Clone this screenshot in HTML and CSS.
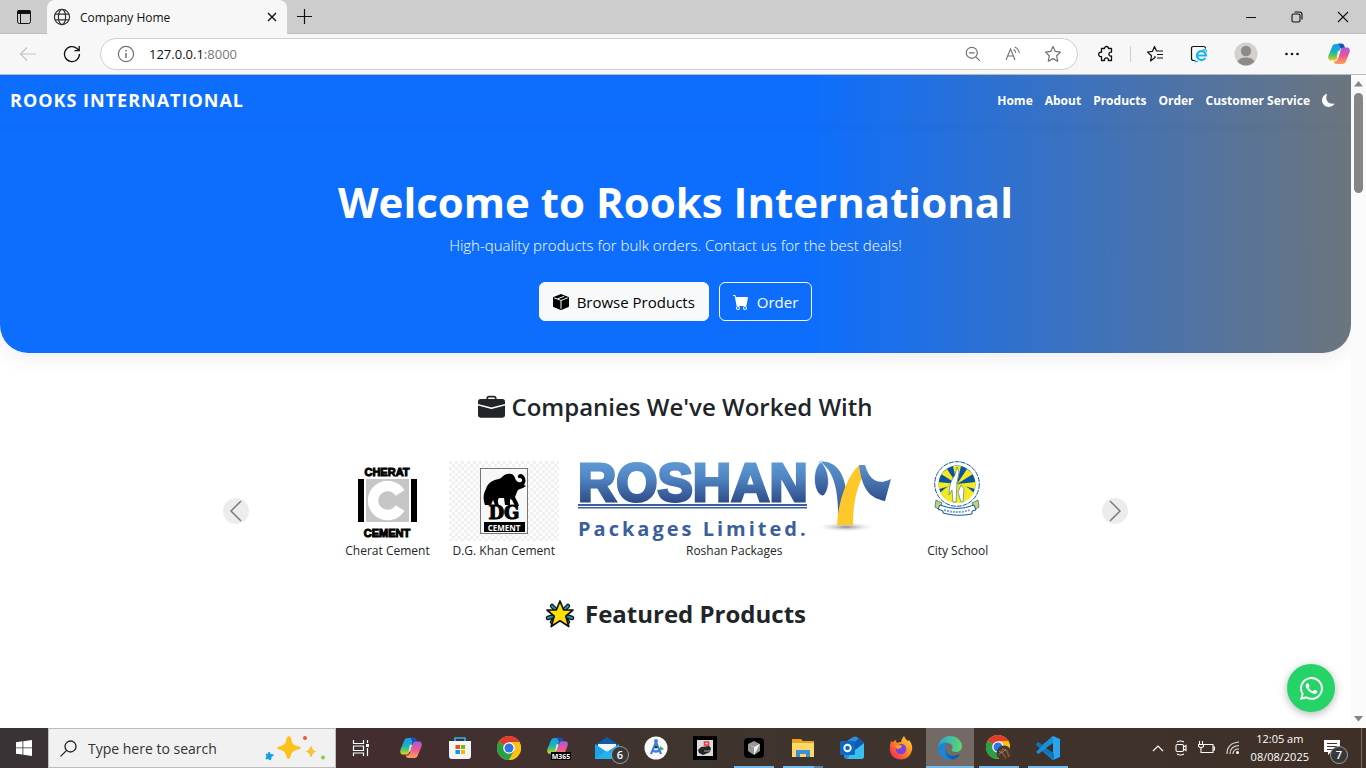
FILE: index.html
```html
<!DOCTYPE html>
<html lang="en">
<head>
<meta charset="utf-8">
<title>Company Home</title>
<link rel="stylesheet" href="styles.css">
</head>
<body>
<svg class="defs" width="0" height="0" aria-hidden="true">
  <defs>
    <linearGradient id="cpA" x1="0" y1="0" x2="0" y2="1"><stop offset="0" stop-color="#1b9be8"/><stop offset=".45" stop-color="#12b3c4"/><stop offset=".75" stop-color="#6cc552"/><stop offset="1" stop-color="#f3d21b"/></linearGradient>
    <linearGradient id="cpB" x1="0" y1="0" x2="0" y2="1"><stop offset="0" stop-color="#a55be8"/><stop offset=".5" stop-color="#f0568c"/><stop offset="1" stop-color="#fba35c"/></linearGradient>
    <linearGradient id="roshanBlue" x1="0" y1="0" x2="0" y2="1"><stop offset="0" stop-color="#5a93cf"/><stop offset="1" stop-color="#2f4f8c"/></linearGradient>
    <linearGradient id="roshanText" gradientUnits="userSpaceOnUse" x1="0" y1="0" x2="0" y2="42"><stop offset="0" stop-color="#5f9bd6"/><stop offset=".4" stop-color="#5085c2"/><stop offset="1" stop-color="#2d4b88"/></linearGradient>
    <linearGradient id="edgeA" x1="0" y1="0" x2="1" y2="0"><stop offset="0" stop-color="#27a6de"/><stop offset="1" stop-color="#5fd668"/></linearGradient>
    <linearGradient id="edgeB" x1="0" y1="0" x2="1" y2="1"><stop offset="0" stop-color="#1583d8"/><stop offset="1" stop-color="#0c4f9c"/></linearGradient>
    <linearGradient id="fox" x1="1" y1="0" x2="0" y2="1"><stop offset="0" stop-color="#ffe13d"/><stop offset=".45" stop-color="#ff8a1f"/><stop offset="1" stop-color="#ee1765"/></linearGradient>
    <radialGradient id="ground"><stop offset="0" stop-color="#8a8a8a"/><stop offset="1" stop-color="#ffffff" stop-opacity="0"/></radialGradient>
    <pattern id="checks" width="6" height="6" patternUnits="userSpaceOnUse"><rect width="6" height="6" fill="#fdfdfd"/><path d="M0 0h3v3H0zM3 3h3v3H3z" fill="#f0f0f0"/></pattern>
    <symbol id="copilot" viewBox="0 0 24 24">
      <path d="M17.500 4.400C17 2.800 16 2 14.300 2H8.600C6.800 2 5.600 3.200 5 5L1.500 13.500c-.9 2.900.1 5 2.700 5h3c1.700 0 2.700-1 3.200-2.600L13 7.500c.6-2 1.800-3.100 4.500-3.100z" fill="url(#cpA)"/>
      <path d="M10 1.500h4.300c1.700 0 2.600.9 3.100 2.500l.8 3h-2.500c-1.500 0-2.300-.8-2.900-2.500-.5-1.900-1.100-3-2.800-3z" fill="#1652b5"/>
      <path d="M6.500 19.600c.5 1.600 1.500 2.400 3.200 2.400h5.700c1.800 0 3-1.200 3.600-3l3.500-8.500c.9-2.900-.1-5-2.700-5h-3c-1.700 0-2.700 1-3.200 2.600L11 16.500c-.6 2-1.800 3.100-4.500 3.100z" fill="url(#cpB)"/>
      <path d="M10.800 8.700h2.600l-2.200 7.100H9.600z" fill="#fff" fill-opacity=".75"/>
    </symbol>
    <symbol id="chrome" viewBox="0 0 24 24">
      <circle cx="12" cy="12" r="12" fill="#fbc116"/>
      <path d="M12 12 1.600 6A12 12 0 0 1 22.400 6z" fill="#e33b2e"/>
      <path d="M1.600 6A12 12 0 0 0 12 24l5.200-9L12 12z" fill="#2b9f48"/>
      <path d="M12 6h10.400A12 12 0 0 1 12 24l5.200-9z" fill="#fbc116"/>
      <circle cx="12" cy="12" r="5.800" fill="#fff"/><circle cx="12" cy="12" r="4.500" fill="#2f74e8"/>
    </symbol>
  </defs>
</svg>

<header class="browser">
  <div class="tabstrip">
    <button class="icon-btn tab-actions" aria-label="Tab actions"><svg width="16" height="16" viewBox="0 0 16 16"><rect x="1.500" y="1.500" width="13" height="13" rx="2" fill="none" stroke="#111"/><path d="M1 3q0-2 2-2h10q2 0 2 2v2H1zM4 5h1v9H4z" fill="#111"/></svg></button>
    <div class="tab">
      <svg width="18" height="18" viewBox="0 0 18 18" fill="none" stroke="#333" stroke-width="1.200"><circle cx="9" cy="9" r="7.600"/><ellipse cx="9" cy="9" rx="3.600" ry="7.600"/><path d="M2 6.200h14M2 11.800h14"/></svg>
      <span class="tab-title">Company Home</span>
      <button class="icon-btn tab-close" aria-label="Close tab"><svg width="10" height="10" viewBox="0 0 10 10" stroke="#111" stroke-width="1.400"><path d="m1 1 8 8M9 1 1 9"/></svg></button>
    </div>
    <button class="icon-btn new-tab" aria-label="New tab"><svg width="15" height="15" viewBox="0 0 15 15" stroke="#111" stroke-width="1.200"><path d="M7.500 0v15M0 7.500h15"/></svg></button>
    <div class="window-controls">
      <button class="icon-btn" aria-label="Minimize"><svg width="12" height="12" viewBox="0 0 12 12" stroke="#111"><path d="M1 6.500h10"/></svg></button>
      <button class="icon-btn" aria-label="Restore"><svg width="12" height="12" viewBox="0 0 12 12" fill="none" stroke="#111" stroke-width="1.100"><rect x="1" y="3" width="8" height="8" rx="1.500"/><path d="M3.500 1h5Q11 1 11 3.500v5"/></svg></button>
      <button class="icon-btn" aria-label="Close"><svg width="12" height="12" viewBox="0 0 12 12" stroke="#111" stroke-width="1.100"><path d="m1 1 10 10M11 1 1 11"/></svg></button>
    </div>
  </div>
  <div class="toolbar">
    <button class="icon-btn nav-btn" aria-label="Back"><svg width="18" height="16" viewBox="0 0 18 16" fill="none" stroke="#c4c4c4" stroke-width="1.200"><path d="M17 8H1.500M8 1.500 1.500 8 8 14.500"/></svg></button>
    <button class="icon-btn nav-btn" aria-label="Refresh"><svg width="18" height="18" viewBox="0 0 18 18" fill="none" stroke="#111" stroke-width="1.300"><path d="M16.500 9A7.500 7.500 0 1 1 14 3.500L16 5.500M16.200 1v4.700h-4.700"/></svg></button>
    <div class="address">
      <svg width="18" height="18" viewBox="0 0 18 18" fill="none" stroke="#707070" stroke-width="1.200"><circle cx="9" cy="9" r="7.600"/><path d="M9 8v5M9 5v1.500" stroke-width="1.500"/></svg>
      <span class="url"><span class="host">127.0.0.1</span>:8000</span>
      <button class="icon-btn" aria-label="Zoom out"><svg width="16" height="16" viewBox="0 0 16 16" fill="none" stroke="#707070" stroke-width="1.200"><circle cx="6.800" cy="6.800" r="5.500"/><path d="M4 6.800h5.600m1.300 4.100 4 4"/></svg></button>
      <button class="icon-btn" aria-label="Read aloud"><svg width="16" height="16" viewBox="0 0 16 16" fill="none" stroke="#707070" stroke-width="1.100"><path d="M1 14 5.500 3 10 14M2.700 10h5.700M8.500 3.500q2 1.300 2.300 3.500M9.800 1q4 1.800 4.700 6"/></svg></button>
      <button class="icon-btn" aria-label="Add to favorites"><svg width="18" height="18" viewBox="0 0 18 18" fill="none" stroke="#707070" stroke-width="1.200" stroke-linejoin="round"><path d="m9 1.500 2.300 4.900 5.200.7-3.800 3.700 1 5.400L9 13.600l-4.700 2.600 1-5.400L1.500 7.100l5.200-.7z"/></svg></button>
    </div>
    <div class="tools">
      <button class="icon-btn" aria-label="Extensions"><svg width="18" height="18" viewBox="0 0 18 18" fill="none" stroke="#111" stroke-width="1.300" stroke-linejoin="round"><path d="M4.500 3.500h3a2 2 0 1 1 4 0h3v3.700a2 2 0 1 0 0 3.800v4.500h-3.200a2 2 0 1 0-3.800 0h-3V11.500a2.200 2.200 0 1 1 0-4.200z"/></svg></button>
      <span class="divider"></span>
      <button class="icon-btn" aria-label="Favorites"><svg width="18" height="18" viewBox="0 0 18 18" fill="none" stroke="#111" stroke-width="1.200" stroke-linejoin="round"><path d="M9 11 9 12.500 4.500 16l1-5.200L1.500 7l5-.7L8.500 1.500l2 4.500h6.500M11 9.500h6M11 13h6"/></svg></button>
      <button class="icon-btn" aria-label="Internet Explorer mode"><svg width="18" height="18" viewBox="0 0 18 18" fill="none"><path d="M5 15.500H3.500q-2 0-2-2v-10q0-2 2-2h10q2 0 2 2" stroke="#111" stroke-width="1.200"/><path d="M15.300 13a4.500 4.500 0 1 1 .7-2.500H7" stroke="#1ab3ee" stroke-width="2.200"/><path d="M5.500 15q-1.800 3 2.500 1M12 5.500q5-2.500 4.300 1.500" stroke="#1ab3ee" stroke-width="1.200"/></svg></button>
      <button class="icon-btn" aria-label="Profile"><svg width="24" height="24" viewBox="0 0 24 24"><circle cx="12" cy="12" r="11.500" fill="#d3d1ce"/><circle cx="12" cy="9" r="5.200" fill="#8d8a87"/><path d="M3.500 19.500q2-4 8.500-4t8.500 4A11.500 11.500 0 0 1 12 23.500a11.500 11.500 0 0 1-8.500-4z" fill="#8d8a87"/></svg></button>
      <button class="icon-btn" aria-label="Settings and more"><svg width="16" height="4" viewBox="0 0 16 4" fill="#111"><circle cx="2.500" cy="2" r="1.300"/><circle cx="8" cy="2" r="1.300"/><circle cx="13.500" cy="2" r="1.300"/></svg></button>
      <button class="icon-btn" aria-label="Copilot"><svg width="26" height="24"><use href="#copilot"/></svg></button>
    </div>
  </div>
</header>

<div class="viewport">
  <main class="page">
    <div class="hero">
      <nav class="navbar">
        <a class="brand" href="#">ROOKS INTERNATIONAL</a>
        <div class="links">
          <a href="#">Home</a><a href="#">About</a><a href="#">Products</a><a href="#">Order</a><a href="#">Customer Service</a>
          <button class="icon-btn" aria-label="Dark mode"><svg width="13" height="13" viewBox="0 0 16 16" fill="#fff"><path d="M6 .278a.77.77 0 0 1 .08.858 7.200 7.200 0 0 0-.878 3.460c0 4.021 3.278 7.277 7.318 7.277q.792-.001 1.533-.16a.79.79 0 0 1 .81.316.73.73 0 0 1-.031.893A8.350 8.350 0 0 1 8.344 16C3.734 16 0 12.286 0 7.710 0 4.266 2.114 1.312 5.124.06A.75.75 0 0 1 6 .278"/></svg></button>
        </div>
      </nav>
      <section class="welcome">
        <h1>Welcome to Rooks International</h1>
        <p>High-quality products for bulk orders. Contact us for the best deals!</p>
        <div class="actions">
          <a class="btn btn-light" href="#"><svg width="16" height="16" viewBox="0 0 16 16" fill="currentColor"><path fill-rule="evenodd" d="M15.528 2.973a.75.75 0 0 1 .472.696v8.662a.75.75 0 0 1-.472.696l-7.250 2.900a.75.75 0 0 1-.557 0l-7.250-2.900A.75.75 0 0 1 0 12.331V3.669a.75.75 0 0 1 .471-.696L7.443.184l.01-.003.268-.108a.75.75 0 0 1 .558 0l.269.108.01.003zM10.404 2 4.250 4.461 1.846 3.500 1 3.839v.4l6.500 2.600v7.922l.5.2.5-.2V6.840l6.500-2.600v-.4l-.846-.339L8 5.961 5.596 5l6.154-2.461z"/></svg>Browse Products</a>
          <a class="btn btn-outline" href="#"><svg width="16" height="16" viewBox="0 0 16 16" fill="currentColor"><path d="M0 1.500A.5.5 0 0 1 .5 1H2a.5.5 0 0 1 .485.379L2.890 3H14.500a.5.5 0 0 1 .491.592l-1.500 8A.5.5 0 0 1 13 12H4a.5.5 0 0 1-.491-.408L2.010 3.607 1.610 2H.5a.5.5 0 0 1-.5-.5M5 12a2 2 0 1 0 0 4 2 2 0 0 0 0-4m7 0a2 2 0 1 0 0 4 2 2 0 0 0 0-4m-7 1a1 1 0 1 1 0 2 1 1 0 0 1 0-2m7 0a1 1 0 1 1 0 2 1 1 0 0 1 0-2"/></svg>Order</a>
        </div>
      </section>
    </div>

    <section class="companies">
      <h2><svg width="27" height="27" viewBox="0 0 16 16" fill="currentColor"><path d="M6.500 1A1.500 1.500 0 0 0 5 2.500V3H1.500A1.500 1.500 0 0 0 0 4.500v1.384l7.614 2.030a1.500 1.500 0 0 0 .772 0L16 5.884V4.500A1.500 1.500 0 0 0 14.500 3H11v-.5A1.500 1.500 0 0 0 9.500 1zm0 1h3a.5.5 0 0 1 .5.5V3H6v-.5a.5.5 0 0 1 .5-.5"/><path d="M0 12.500A1.500 1.500 0 0 0 1.500 14h13a1.500 1.500 0 0 0 1.500-1.500V6.850L8.129 8.947a.5.5 0 0 1-.258 0L0 6.850z"/></svg>Companies We've Worked With</h2>
      <div class="carousel">
        <button class="arrow" aria-label="Previous"><svg width="14" height="24" viewBox="0 0 14 24" fill="none" stroke="#7b7b7b" stroke-width="1.500"><path d="M12 2 2 12l10 10"/></svg></button>
        <div class="slides">
          <figure>
            <svg width="84" height="80" viewBox="0 0 84 80" role="img" aria-label="Cherat Cement logo">
              <text class="logo-narrow" x="41" y="15" text-anchor="middle">CHERAT</text>
              <path d="M12 18h6v43h-6zM65 18h6v43h-6z"/><path d="M20 18h43v43H20z" fill="#c6c6c6"/>
              <path d="M54 32A14.500 14.500 0 1 0 54 47" fill="none" stroke="#fff" stroke-width="10.500"/>
              <text class="logo-narrow" x="41" y="76" text-anchor="middle">CEMENT</text>
            </svg>
            <figcaption>Cherat Cement</figcaption>
          </figure>
          <figure>
            <svg width="110" height="80" viewBox="0 0 110 80" role="img" aria-label="D.G. Khan Cement logo">
              <rect width="110" height="80" fill="url(#checks)"/>
              <rect x="31.500" y="7.500" width="47" height="65" fill="#f8f8f8" stroke="#777"/>
              <path d="M36 44C34 38 34 33 37 28c1-5 6-9 13-10 3-1 4-4 8-5 4-1 7 0 8 4 1 3 3 5 6 4 2-1 1-4-1-4-3 1-3-4 1-4 4 1 6 7 3 11l2 1-3 2c-3 1-5 1-6 4l-2 5 3 6 1 3h-4l-3-6-2-1v6h-5l-1-7-5 0c-2 2-1 5 0 7h-4l-2-5-2 5z"/>
              <text class="logo-slab" x="55" y="58" text-anchor="middle">DG</text>
              <path d="M35 61h41v10H35z"/><text class="logo-tag" x="55" y="70" text-anchor="middle">CEMENT</text>
            </svg>
            <figcaption>D.G. Khan Cement</figcaption>
          </figure>
          <figure>
            <svg class="wide-logo" width="313" height="80" viewBox="0 0 313 80" role="img" aria-label="Roshan Packages logo">
              <text class="logo-roshan" x="0" y="40">ROSHAN</text>
              <path d="M0 43h229v2H0zM0 46h229v1.500H0z" fill="#3b5f9d"/>
              <text class="logo-packages" x="0" y="75">Packages Limited.</text>
              <ellipse cx="268" cy="66" rx="31" ry="5" fill="url(#ground)"/>
              <path d="M240 1c16-3 26 10 28 28l-8 33C261 34 257 10 243 2z" fill="url(#roshanBlue)"/>
              <path d="M245 35C234 33 234 6 243 1c9 8 10 28 2 34z" fill="url(#roshanBlue)" stroke="#fff" stroke-width=".7"/>
              <path d="M259 64c1-22 9-47 22-60l6 8c-9 14-12 32-12 52z" fill="#fec928"/>
              <path d="M281 4h6c5 17 14 20 26 14l-6 22c-15-3-23-11-26-36z" fill="url(#roshanBlue)"/>
            </svg>
            <figcaption>Roshan Packages</figcaption>
          </figure>
          <figure>
            <svg width="96" height="80" viewBox="0 0 96 80" role="img" aria-label="City School crest">
              <path d="m26 39 6 3-2 7-5-3zM68 39l-6 3 2 7 5-3z" fill="#c5d36a" stroke="#356d9d" stroke-width=".8"/>
              <circle cx="47" cy="23" r="22.300" fill="#fff" stroke="#0b559f" stroke-dasharray="5 1"/>
              <circle cx="47" cy="23" r="18.500" fill="#0b559f"/>
              <path d="M47 23 43 5h8zM47 23 31 13l6-5zM47 23l16-10-6-5zM47 23 29 28l-1-7zM47 23l18 5 1-7z" fill="#f5ea22"/>
              <path d="M30 32q17-18 34 0-6 10-17 10T30 32z" fill="#f5ea22"/>
              <path d="m47 6 2 5-2 10-1 20h-3l-1-12-3 5q0-13 6-20zM51 24l3 4-1 13h-2l-3-10z" fill="#fff" stroke="#4b8089" stroke-width=".7"/>
              <path d="M30 44q17 7 34 0l2 5-4 1v3q-15 3-29-1v-2l-5-2z" fill="#fff" stroke="#0b559f"/>
              <path d="M34 49q13 4 26 0" fill="none" stroke="#7da1c5" stroke-width="2" stroke-dasharray="2 1"/>
            </svg>
            <figcaption>City School</figcaption>
          </figure>
        </div>
        <button class="arrow" aria-label="Next"><svg width="14" height="24" viewBox="0 0 14 24" fill="none" stroke="#7b7b7b" stroke-width="1.500"><path d="m2 2 10 10L2 22"/></svg></button>
      </div>
    </section>

    <section class="featured">
      <h2><svg width="30" height="30" viewBox="0 0 30 30" stroke="#111" stroke-linejoin="round"><path d="m7 7 16 16M23 7 7 23M3 19l9-3M27 19l-9-3" stroke-width="4.500" stroke-linecap="round"/><path d="m7 7 16 16M23 7 7 23M3 19l9-3M27 19l-9-3" stroke="#2293b8" stroke-width="2" stroke-linecap="round"/><path d="m15 2 3.700 9h9.300l-7.200 6.200 3 10.300L15 21.800l-8.800 5.700 3-10.300L2 11h9.300z" fill="#ffe000" stroke-width="1.700"/></svg>Featured Products</h2>
    </section>
    <a class="whatsapp" href="#" aria-label="WhatsApp"><svg width="23" height="23" viewBox="0 0 16 16" fill="#fff"><path d="M13.601 2.326A7.850 7.850 0 0 0 7.994 0C3.627 0 .068 3.558.064 7.926c0 1.399.366 2.760 1.057 3.965L0 16l4.204-1.102a7.900 7.900 0 0 0 3.790.965h.004c4.368 0 7.926-3.558 7.930-7.930A7.900 7.900 0 0 0 13.600 2.326zM7.994 14.521a6.600 6.600 0 0 1-3.356-.92l-.24-.144-2.494.654.666-2.433-.156-.251a6.560 6.560 0 0 1-1.007-3.505c0-3.626 2.957-6.584 6.591-6.584a6.560 6.560 0 0 1 4.660 1.931 6.560 6.560 0 0 1 1.928 4.660c-.004 3.639-2.961 6.592-6.592 6.592m3.615-4.934c-.197-.099-1.170-.578-1.353-.646-.182-.065-.315-.099-.445.099-.133.197-.513.646-.627.775-.114.133-.232.148-.43.05-.197-.1-.836-.308-1.592-.985-.59-.525-.985-1.175-1.103-1.372-.114-.198-.011-.304.088-.403.087-.088.197-.232.296-.346.1-.114.133-.198.198-.33.065-.134.034-.248-.015-.347-.05-.099-.445-1.076-.612-1.470-.16-.389-.323-.335-.445-.34-.114-.007-.247-.007-.38-.007a.73.73 0 0 0-.529.247c-.182.198-.691.677-.691 1.654s.71 1.916.81 2.049c.098.133 1.394 2.132 3.383 2.992.47.205.84.326 1.129.418.475.152.904.129 1.246.08.38-.058 1.171-.48 1.338-.943.164-.464.164-.86.114-.992-.049-.133-.182-.198-.38-.297"/></svg></a>
  </main>
  <div class="scrollbar">
    <svg width="9" height="6" viewBox="0 0 9 6" fill="#858585"><path d="M4.500 0 9 5.500H0z"/></svg>
    <span class="thumb"></span>
    <svg class="down" width="9" height="6" viewBox="0 0 9 6" fill="#858585"><path d="M0 0h9L4.500 5.500z"/></svg>
  </div>
</div>

<footer class="taskbar">
  <button class="task start" aria-label="Start"><svg width="16" height="16" viewBox="0 0 16 16" fill="#fff"><path d="m0 2.200 6.500-.9v6.200H0zM7.300 1.200 16 0v7.500H7.300zM0 8.300h6.500v6.300L0 13.700zM7.300 8.300H16V16l-8.700-1.200z"/></svg></button>
  <label class="search">
    <svg width="17" height="17" viewBox="0 0 17 17" fill="none" stroke="#222" stroke-width="1.300"><circle cx="10.500" cy="6.500" r="5.500"/><path d="m6.600 10.400-6 6"/></svg>
    <input type="text" placeholder="Type here to search" aria-label="Type here to search">
    <svg width="62" height="28" viewBox="0 0 62 28"><path d="M24 2q2 0 3 6 1 3 5 4 4 1 4 2t-5 2q-4 1-5 5-1 4-2.500 4T21 21q-1-4-5-5t-4-2 4-2q4-1 5-5 1-5 3-5z" fill="#fcc11b"/><path d="M46 12q1 0 1.500 3 .5 1.500 4 2.500-3.500 1-4 3Q47 23 46 23t-1.500-3q-.5-1.500-4-2.500 3.500-1 4-3Q45 12 46 12z" fill="#f9c03d"/><path d="m4 18 1.500 2.500 3 .5L6 23l-.5 3L3 24.500l-2 .5 1-3-1-2 2.500.3z" fill="#10a0e8" stroke="#10a0e8"/><circle cx="40" cy="4" r="2" fill="#f0592a"/><circle cx="58" cy="23.500" r="2" fill="#86cc45"/></svg>
  </label>
  <div class="apps">
    <button class="task first" aria-label="Task view"><svg width="18" height="18" viewBox="0 0 18 18" fill="none" stroke="#fff" stroke-width="1.200"><path d="M1.500 1v3.500h10V1M1.500 17v-3h10v3M1.500 7h10v4.500h-10zM15.500 1v3M15.500 9v8"/><path d="M14 5h3v3h-3z" fill="#fff" stroke="none"/></svg></button>
    <button class="task" aria-label="Copilot"><svg width="24" height="24"><use href="#copilot"/></svg></button>
    <button class="task" aria-label="Microsoft Store"><svg width="24" height="24" viewBox="0 0 24 24"><path d="M7 6V2h10v4" fill="none" stroke="#2bb7ea" stroke-width="1.600"/><path d="M1 5h22v15q0 3-3 3H4q-3 0-3-3z" fill="#f4f4f4"/><path d="M7.500 9H12v4H7.500z" fill="#f04e1f"/><path d="M13 9h4v4h-4z" fill="#7cb900"/><path d="M7.500 14H12v4H7.500z" fill="#00a1eb"/><path d="M13 14h4v4h-4z" fill="#fcb400"/></svg></button>
    <button class="task" aria-label="Chrome"><svg width="24" height="24"><use href="#chrome"/></svg></button>
    <button class="task" aria-label="Microsoft 365 Copilot"><svg width="26" height="24" viewBox="0 0 26 24"><use href="#copilot" width="25" height="23"/><path d="M6 16h20v8H6z" fill="#000"/><text class="m365" x="16" y="23" text-anchor="middle">M365</text></svg></button>
    <button class="task" aria-label="Mail"><svg width="24" height="24" viewBox="0 0 24 24"><path d="M0 9 12 1l12 8v4H0z" fill="#0c5da8"/><path d="M3 8h18v9H3z" fill="#f4f4f4"/><path d="m0 8 12 8 12-8v15H0z" fill="#1ba4e8"/><path d="m0 23 12-9 12 9z" fill="#2cc0f4" opacity=".5"/></svg><span class="badge">6</span></button>
    <button class="task" aria-label="Android Studio"><svg width="24" height="24" viewBox="0 0 24 24"><circle cx="12" cy="12" r="11.500" fill="#fafafa"/><path d="m7 18 5-12 5 12M8 14q4 3 8 0" fill="none" stroke="#3f7de8" stroke-width="2.200"/><path d="m16 10 4 3-4 2z" fill="#35b56a"/><circle cx="12" cy="5" r="2" fill="#3f7de8"/><circle cx="12" cy="11" r="1.500" fill="#333"/></svg></button>
    <button class="task" aria-label="Car game"><svg width="24" height="24" viewBox="0 0 24 24"><path d="M0 0h24v24H0z"/><path d="M4 4h16v16H4z" fill="#dcdcdf"/><path d="M15.500 11V6h-4v3h4" fill="none" stroke="#e53b40" stroke-width="1.600"/><path d="m5 14 3-3 8-1 2 2-1 4-7 3-4-2z" fill="#252525"/><path d="M11 15h6" stroke="#aaa"/></svg></button>
    <button class="task open" aria-label="Cursor"><svg width="20" height="20" viewBox="0 0 20 20"><rect width="20" height="20" rx="4"/><path d="m10 3 6 3v7l-6 4-6-4V6z" fill="#999"/><path d="m4 6 6 3 6-3-6 11V9.500z" fill="#f5f5f5"/></svg></button>
    <button class="task open stacked" aria-label="File Explorer"><svg width="24" height="24" viewBox="0 0 24 24"><path d="M1 3h9l2 2h11v16H1z" fill="#e6a51b"/><path d="M1 7h22v14H1z" fill="#fdd768"/><path d="M5 21v-7h14v7h-4v-3H9v3z" fill="#3a91d6"/></svg></button>
    <button class="task" aria-label="Outlook"><svg width="24" height="24" viewBox="0 0 24 24"><path d="m4 7 9-6q2-1 4 0l7 6v13q0 3-3 3H7q-3 0-3-3z" fill="#2a8fe0"/><path d="m14 14 10-7v13q0 3-3 3H7z" fill="#37bff0"/><path d="m13 8 6-6 5 5-9 7z" fill="#1259b0"/><rect y="5" width="15" height="14" rx="1.500" fill="#1068bf"/><circle cx="7.500" cy="12" r="3.200" fill="none" stroke="#fff" stroke-width="1.900"/></svg></button>
    <button class="task" aria-label="Firefox"><svg width="24" height="24" viewBox="0 0 24 24"><path d="M2 5q1 1 2 1 2-2 3-2 0 2 1 3 2-1 4-1 1-4 3-6 1 3 4 5l1-1q4 5 3 10-2 9-11 9.500Q2 23 .8 14.500.5 9 2 5z" fill="url(#fox)"/><circle cx="12" cy="13" r="5.300" fill="#7a43dc"/><path d="M6 10q4-3 7 0-1 3-5 3z" fill="#ff9a24"/></svg></button>
    <button class="task open active" aria-label="Edge"><svg width="24" height="24" viewBox="0 0 24 24"><path d="M0 12C1 4 6 0 12 0c7 0 12 5 12 10 0 4-3 6-6 6-3 0-5-1-4-3 2-3-1-6-5-6-5 0-8 3-9 5z" fill="url(#edgeA)"/><path d="M0 12c1-4 5-6 9-5.500C5 9 6 20 16 23.300 8 26 0 20 0 12z" fill="#1a86d8"/><path d="M9 9q-3 4 0 8 4 5 13 1-2 4-7 5.500C7 23 5 14 9 9z" fill="url(#edgeB)"/></svg></button>
    <button class="task open" aria-label="Chrome profile"><svg width="26" height="26" viewBox="0 0 26 26"><use href="#chrome" width="24" height="24"/><circle cx="18" cy="18" r="7.500" fill="#4a3830"/><path d="m13 20 4-6 4 2 2 6M15 16l5 7" fill="none" stroke="#a0602c" stroke-width="1.200"/><path d="m13 16 3 2 4-4" stroke="#7888a0" fill="none"/></svg></button>
    <button class="task open" aria-label="Visual Studio Code"><svg width="24" height="24" viewBox="0 0 24 24"><path d="m17 0 7 3v18l-7 3L3 12z" fill="#2aa4ee"/><path d="m0 8 2.500-2L18 18v6L0 9z" fill="#0b76be"/><path d="M0 16 17 0v7L2.500 18z" fill="#1c8fd6"/><path d="m17 7-7 5 7 5z" fill="#3a3029"/></svg></button>
  </div>
  <div class="tray">
    <svg width="12" height="8" viewBox="0 0 12 8" fill="none" stroke="#fff" stroke-width="1.200"><path d="m1 7 5-5 5 5"/></svg>
    <svg width="12" height="16" viewBox="0 0 12 16" fill="none" stroke="#fff" stroke-width="1.100"><rect x="1" y="4.500" width="7.500" height="7" rx="1.500"/><path d="m8.500 7 2.500-1.500v5L8.500 9M2 2q3.500-2 7 0M2 14q3.500 2 7 0"/></svg>
    <svg width="17" height="14" viewBox="0 0 17 14" fill="none" stroke="#fff" stroke-width="1.100"><path d="M6 3.500h9v8H5.500M15.500 6h1v3h-1M1.500 0v3M4.500 0v3M.5 3.500h5v2q-2.500 2-5 0zM3 7v4.500h3"/></svg>
    <svg width="14" height="14" viewBox="0 0 14 14" fill="none" stroke="#ddd" stroke-width="1.200"><path d="M1 13Q1 2 13 1M4 13Q4 5 13 4.500M7 13q0-5 6-5"/><circle cx="11.500" cy="11.500" r="1.500" fill="#fff" stroke="none"/></svg>
    <div class="clock"><span>12:05 am</span><span>08/08/2025</span></div>
    <button class="notice" aria-label="Notifications"><svg width="16" height="16" viewBox="0 0 16 16"><path d="M0 0h16v12H7l-3 3v-3H0z" fill="#fff"/><path d="M3 3.500h10M3 6.500h10M3 9.500h7" stroke="#3e3028"/></svg><span class="badge">7</span></button>
  </div>
</footer>
</body>
</html>
```
FILE: styles.css
```css
* { box-sizing: border-box; }
body {
  margin: 0;
  height: 100vh;
  display: flex;
  flex-direction: column;
  overflow: hidden;
  font-family: "Open Sans", "Noto Sans", sans-serif;
  color: #212529;
}
svg { display: block; flex: none; }
.defs { position: absolute; }
a { color: inherit; text-decoration: none; }
button { font: inherit; color: inherit; border: 0; padding: 0; background: none; }
.icon-btn { display: flex; align-items: center; justify-content: center; }

/* Browser frame */
.browser { background: #f7f7f7; border-bottom: 1px solid #b9b9b9; }
.tabstrip { display: flex; height: 34px; background: #cdcdcd; border-bottom: 1px solid #bdbdbd; }
.tab-actions { width: 47px; }
.tab {
  display: flex;
  align-items: center;
  width: 240px;
  height: 34px;
  padding: 0 10px 0 6px;
  gap: 9px;
  background: #f7f7f7;
  border-radius: 8px 8px 0 0;
}
.tab-title { flex: 1; font-size: 12px; color: #111; }
.new-tab { width: 35px; }
.window-controls { display: flex; margin-left: auto; }
.window-controls .icon-btn { width: 46px; }
.toolbar { display: flex; align-items: center; height: 40px; padding: 0 14px 0 6px; }
.nav-btn { width: 44px; }
.address {
  display: flex;
  align-items: center;
  flex: 1;
  height: 32px;
  margin-left: 6px;
  padding: 0 11px 0 16px;
  gap: 14px;
  background: #fff;
  border: 1px solid #cfcfcf;
  border-radius: 16px;
}
.address .icon-btn { width: 26px; }
.url { flex: 1; font-size: 13px; color: #767676; }
.host { color: #111; }
.tools { display: flex; align-items: center; gap: 26px; padding-left: 19px; }
.divider { width: 1px; height: 16px; margin: 0 -11px; background: #cfcfcf; }

/* Page */
.viewport { flex: 1; display: flex; min-height: 0; }
.page { flex: 1; position: relative; background: #fff; overflow: hidden; }
.hero {
  background: linear-gradient(90deg, #0d6efd 60%, #6c757d 100%);
  color: #fff;
  border-radius: 0 0 28px 28px;
  box-shadow: 0 4px 22px rgba(0, 0, 0, 0.08);
}
.navbar {
  display: flex;
  align-items: center;
  justify-content: space-between;
  height: 50px;
  padding: 0 16px 0 10px;
  box-shadow: 0 2px 8px rgba(0, 0, 0, 0.04);
}
.brand { font-size: 18px; font-weight: 700; letter-spacing: 1px; }
.links { display: flex; align-items: center; gap: 12px; font-size: 12px; font-weight: 700; }
.welcome { display: flex; flex-direction: column; align-items: center; padding: 50px 16px 32px; text-align: center; }
.welcome h1 { margin: 0; font-size: 42px; line-height: 54px; font-weight: 700; }
.welcome p { margin: 4px 0 25px; font-size: 15px; line-height: 24px; font-weight: 300; }
.actions { display: flex; gap: 10px; }
.btn {
  display: flex;
  align-items: center;
  gap: 8px;
  height: 39px;
  padding: 0 13px;
  border: 1px solid #f8f9fa;
  border-radius: 6px;
  font-size: 15px;
}
.btn-light { background: #f8f9fa; color: #000; }
.companies h2, .featured h2 { display: flex; align-items: center; justify-content: center; margin: 0; line-height: 32px; font-size: 24px; }
.companies { padding-top: 38px; }
.companies h2 { gap: 6px; font-weight: 600; }
.carousel { display: flex; align-items: center; justify-content: space-between; width: 67%; margin: 38px auto 0; }
.arrow { display: flex; align-items: center; justify-content: center; width: 26px; height: 26px; border-radius: 50%; background: #ececec; }
.slides { display: flex; gap: 19px; }
figure { display: flex; flex-direction: column; align-items: center; margin: 0; }
figcaption { font-size: 12px; line-height: 20px; white-space: nowrap; }
.featured { padding-top: 37px; }
.featured h2 { gap: 10px; font-weight: 700; }
.whatsapp {
  position: absolute;
  right: 16px;
  bottom: 16px;
  display: flex;
  align-items: center;
  justify-content: center;
  width: 48px;
  height: 48px;
  border-radius: 50%;
  background: #25d366;
  box-shadow: 0 2px 8px rgba(0, 0, 0, 0.3);
}
.scrollbar { display: flex; flex-direction: column; align-items: center; width: 15px; padding: 6px 0; gap: 6px; background: #fafafa; }
.thumb { width: 9px; height: 100px; border-radius: 5px; background: #858585; }
.down { margin-top: auto; }

/* Lettering inside the company logos */
.wide-logo { overflow: visible; }
.logo-narrow { font: 700 11px "Liberation Sans Narrow", "Liberation Sans", sans-serif; stroke: #000; stroke-width: 1px; }
.logo-slab { font: 700 18px "DejaVu Serif", serif; stroke: #000; stroke-width: 1px; }
.logo-tag { font: 700 8px "Open Sans", sans-serif; fill: #fff; }
.logo-roshan { font: 700 53px "Liberation Sans", sans-serif; fill: url(#roshanText); stroke: url(#roshanText); stroke-width: 3px; }
.logo-packages { font: 700 20px "Open Sans", sans-serif; letter-spacing: 3px; fill: #3b5f9d; }
.m365 { font: 700 7px "Open Sans", sans-serif; fill: #fff; }

/* Taskbar */
.taskbar { display: flex; height: 40px; background: linear-gradient(90deg, #393335, #432d2f 28%, #3f352f 50%, #3e3027); color: #fff; }
.task { position: relative; display: flex; align-items: center; justify-content: center; width: 48px; height: 40px; }
.first { width: 50px; }
.search { display: flex; align-items: center; width: 288px; padding: 0 8px 0 11px; gap: 11px; background: #f1f1f1; border: 1px solid #bdbdbd; }
.search input { flex: 1; min-width: 0; padding: 0; border: 0; background: none; font: 14px "Open Sans", sans-serif; }
.search input::placeholder { color: #333; opacity: 1; }
.apps { display: flex; gap: 1px; }
.open::after { content: ""; position: absolute; bottom: 0; left: 4px; right: 4px; height: 2px; background: #76b9ed; }
.stacked::after { background: linear-gradient(90deg, #76b9ed 78%, #5684a7 78%); }
.active { background: #746a65; }
.active::after { left: 0; right: 0; }
.badge {
  position: absolute;
  right: 3px;
  bottom: 5px;
  width: 16px;
  height: 16px;
  border-radius: 50%;
  background: #383838;
  box-shadow: 0 0 0 1px #999;
  font-size: 11px;
  font-weight: 600;
  line-height: 16px;
  text-align: center;
}
.tray { display: flex; align-items: center; margin-left: auto; padding-right: 4px; gap: 11px; }
.clock { display: flex; flex-direction: column; align-items: center; font-size: 11px; line-height: 18px; }
.notice { position: relative; display: flex; align-items: center; width: 42px; height: 40px; padding-left: 4px; border-right: 1px solid #746a65; }
.notice .badge { right: 14px; }
```
